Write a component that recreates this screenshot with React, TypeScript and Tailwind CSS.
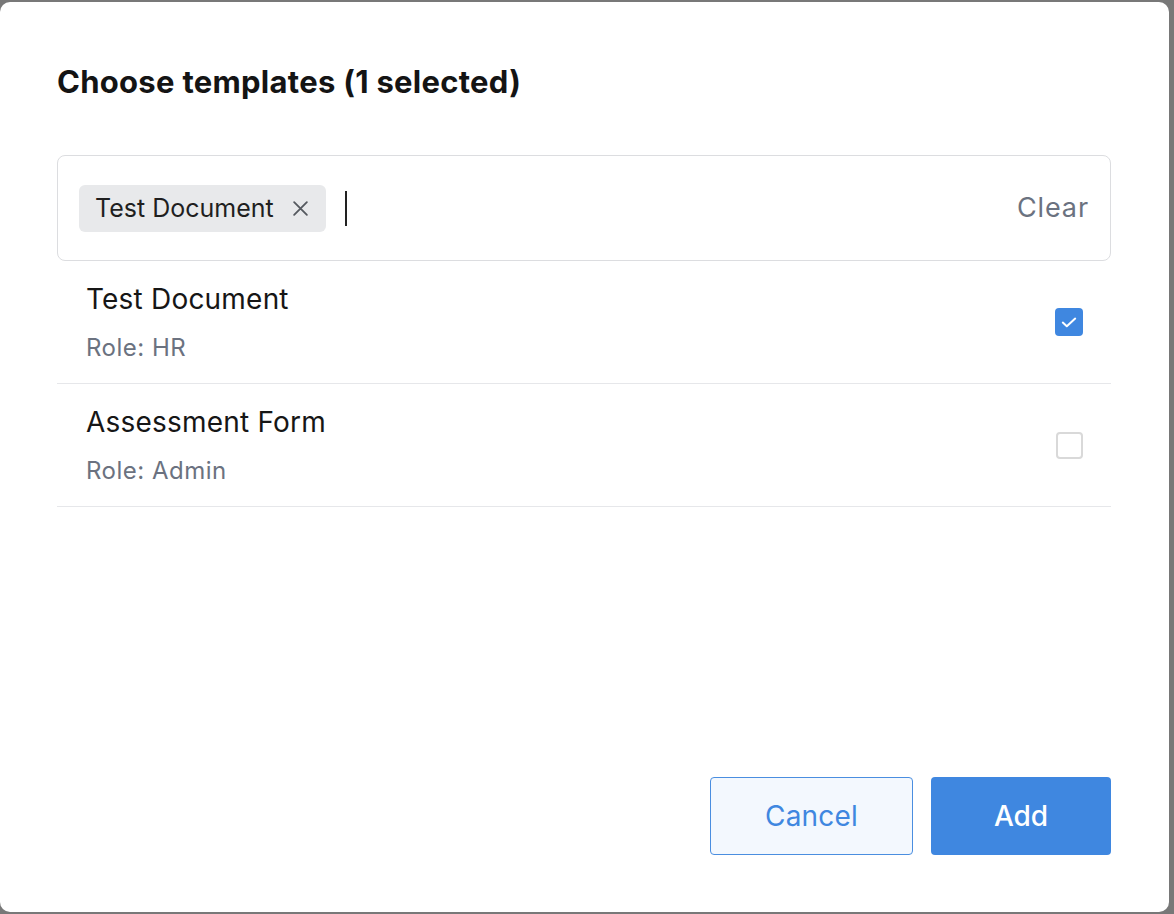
import React, { useState } from "react";

type Template = { id: string; name: string; role: string };

const templates: Template[] = [
  { id: "test", name: "Test Document", role: "HR" },
  { id: "assessment", name: "Assessment Form", role: "Admin" },
];

function CheckIcon() {
  return (
    <svg width="16" height="11" viewBox="0 0 16 11" fill="none">
      <path d="M1.8 5.6l4 3.7L14.2 1.6" stroke="white" strokeWidth="2" strokeLinecap="round" strokeLinejoin="round" />
    </svg>
  );
}

function CloseIcon() {
  return (
    <svg width="17" height="17" viewBox="0 0 16 16" fill="none">
      <path d="M2 2l12 12M14 2L2 14" stroke="#55595f" strokeWidth="1.7" strokeLinecap="round" />
    </svg>
  );
}

export default function App() {
  const [selected, setSelected] = useState<string[]>(["test"]);

  const toggle = (id: string) =>
    setSelected((s) => (s.includes(id) ? s.filter((x) => x !== id) : [...s, id]));

  return (
    <div
      className="h-[914px] w-[1174px] bg-[#787878] pt-[2px] pr-[5px] pb-[2px]"
      style={{ fontFamily: "Inter, 'Noto Sans', sans-serif" }}
    >
      <div className="flex h-full flex-col rounded-[10px] bg-white pl-[57px] pr-[58px] pt-[61px] pb-[57px]">
        <h1 className="text-[31px] font-bold leading-[38px] tracking-[0.28px] text-[#141414]">
          Choose templates ({selected.length} selected)
        </h1>

        <div className="mt-[54px] flex h-[106px] items-center rounded-[8px] border border-[#dcdde0] pl-[21px] pr-[21px]">
          {templates
            .filter((t) => selected.includes(t.id))
            .map((t) => (
              <div
                key={t.id}
                className="flex h-[47px] items-center gap-[18px] rounded-[6px] bg-[#e8e9eb] pl-[16px] pr-[17px]"
              >
                <span className="text-[25px] leading-none text-[#1f1f1f]">{t.name}</span>
                <CloseIcon />
              </div>
            ))}
          <div className="ml-[19px] h-[35px] w-[2px] bg-[#222]" />
          <div className="flex-1" />
          <span className="text-[27px] tracking-[0.9px] text-[#6b7280]">Clear</span>
        </div>

        <div className="flex flex-col">
          {templates.map((t) => {
            const on = selected.includes(t.id);
            return (
              <div
                key={t.id}
                onClick={() => toggle(t.id)}
                className="flex h-[123px] items-center justify-between border-b border-[#e6e7ea] pl-[29px] pr-[28px]"
              >
                <div className="flex flex-col">
                  <span className="text-[28px] leading-[34px] tracking-[0.2px] text-[#161616]">{t.name}</span>
                  <span className="mt-[17px] text-[24px] leading-[30px] tracking-[0.5px] text-[#6b7280]">
                    Role: {t.role}
                  </span>
                </div>
                {on ? (
                  <div className="flex h-[28px] w-[28px] items-center justify-center rounded-[4px] bg-[#3f87e0]">
                    <CheckIcon />
                  </div>
                ) : (
                  <div className="h-[27px] w-[27px] rounded-[4px] border-2 border-[#d9d9d9]" />
                )}
              </div>
            );
          })}
        </div>

        <div className="flex-1" />

        <div className="flex justify-end gap-[18px]">
          <button className="h-[78px] w-[203px] rounded-[4px] border border-[#4a8ee0] bg-[#f3f8fe] text-[28px] tracking-[0.2px] text-[#3f87e0]">
            Cancel
          </button>
          <button className="h-[78px] w-[180px] rounded-[4px] bg-[#3f87e0] text-[28px] font-medium text-white">
            Add
          </button>
        </div>
      </div>
    </div>
  );
}
